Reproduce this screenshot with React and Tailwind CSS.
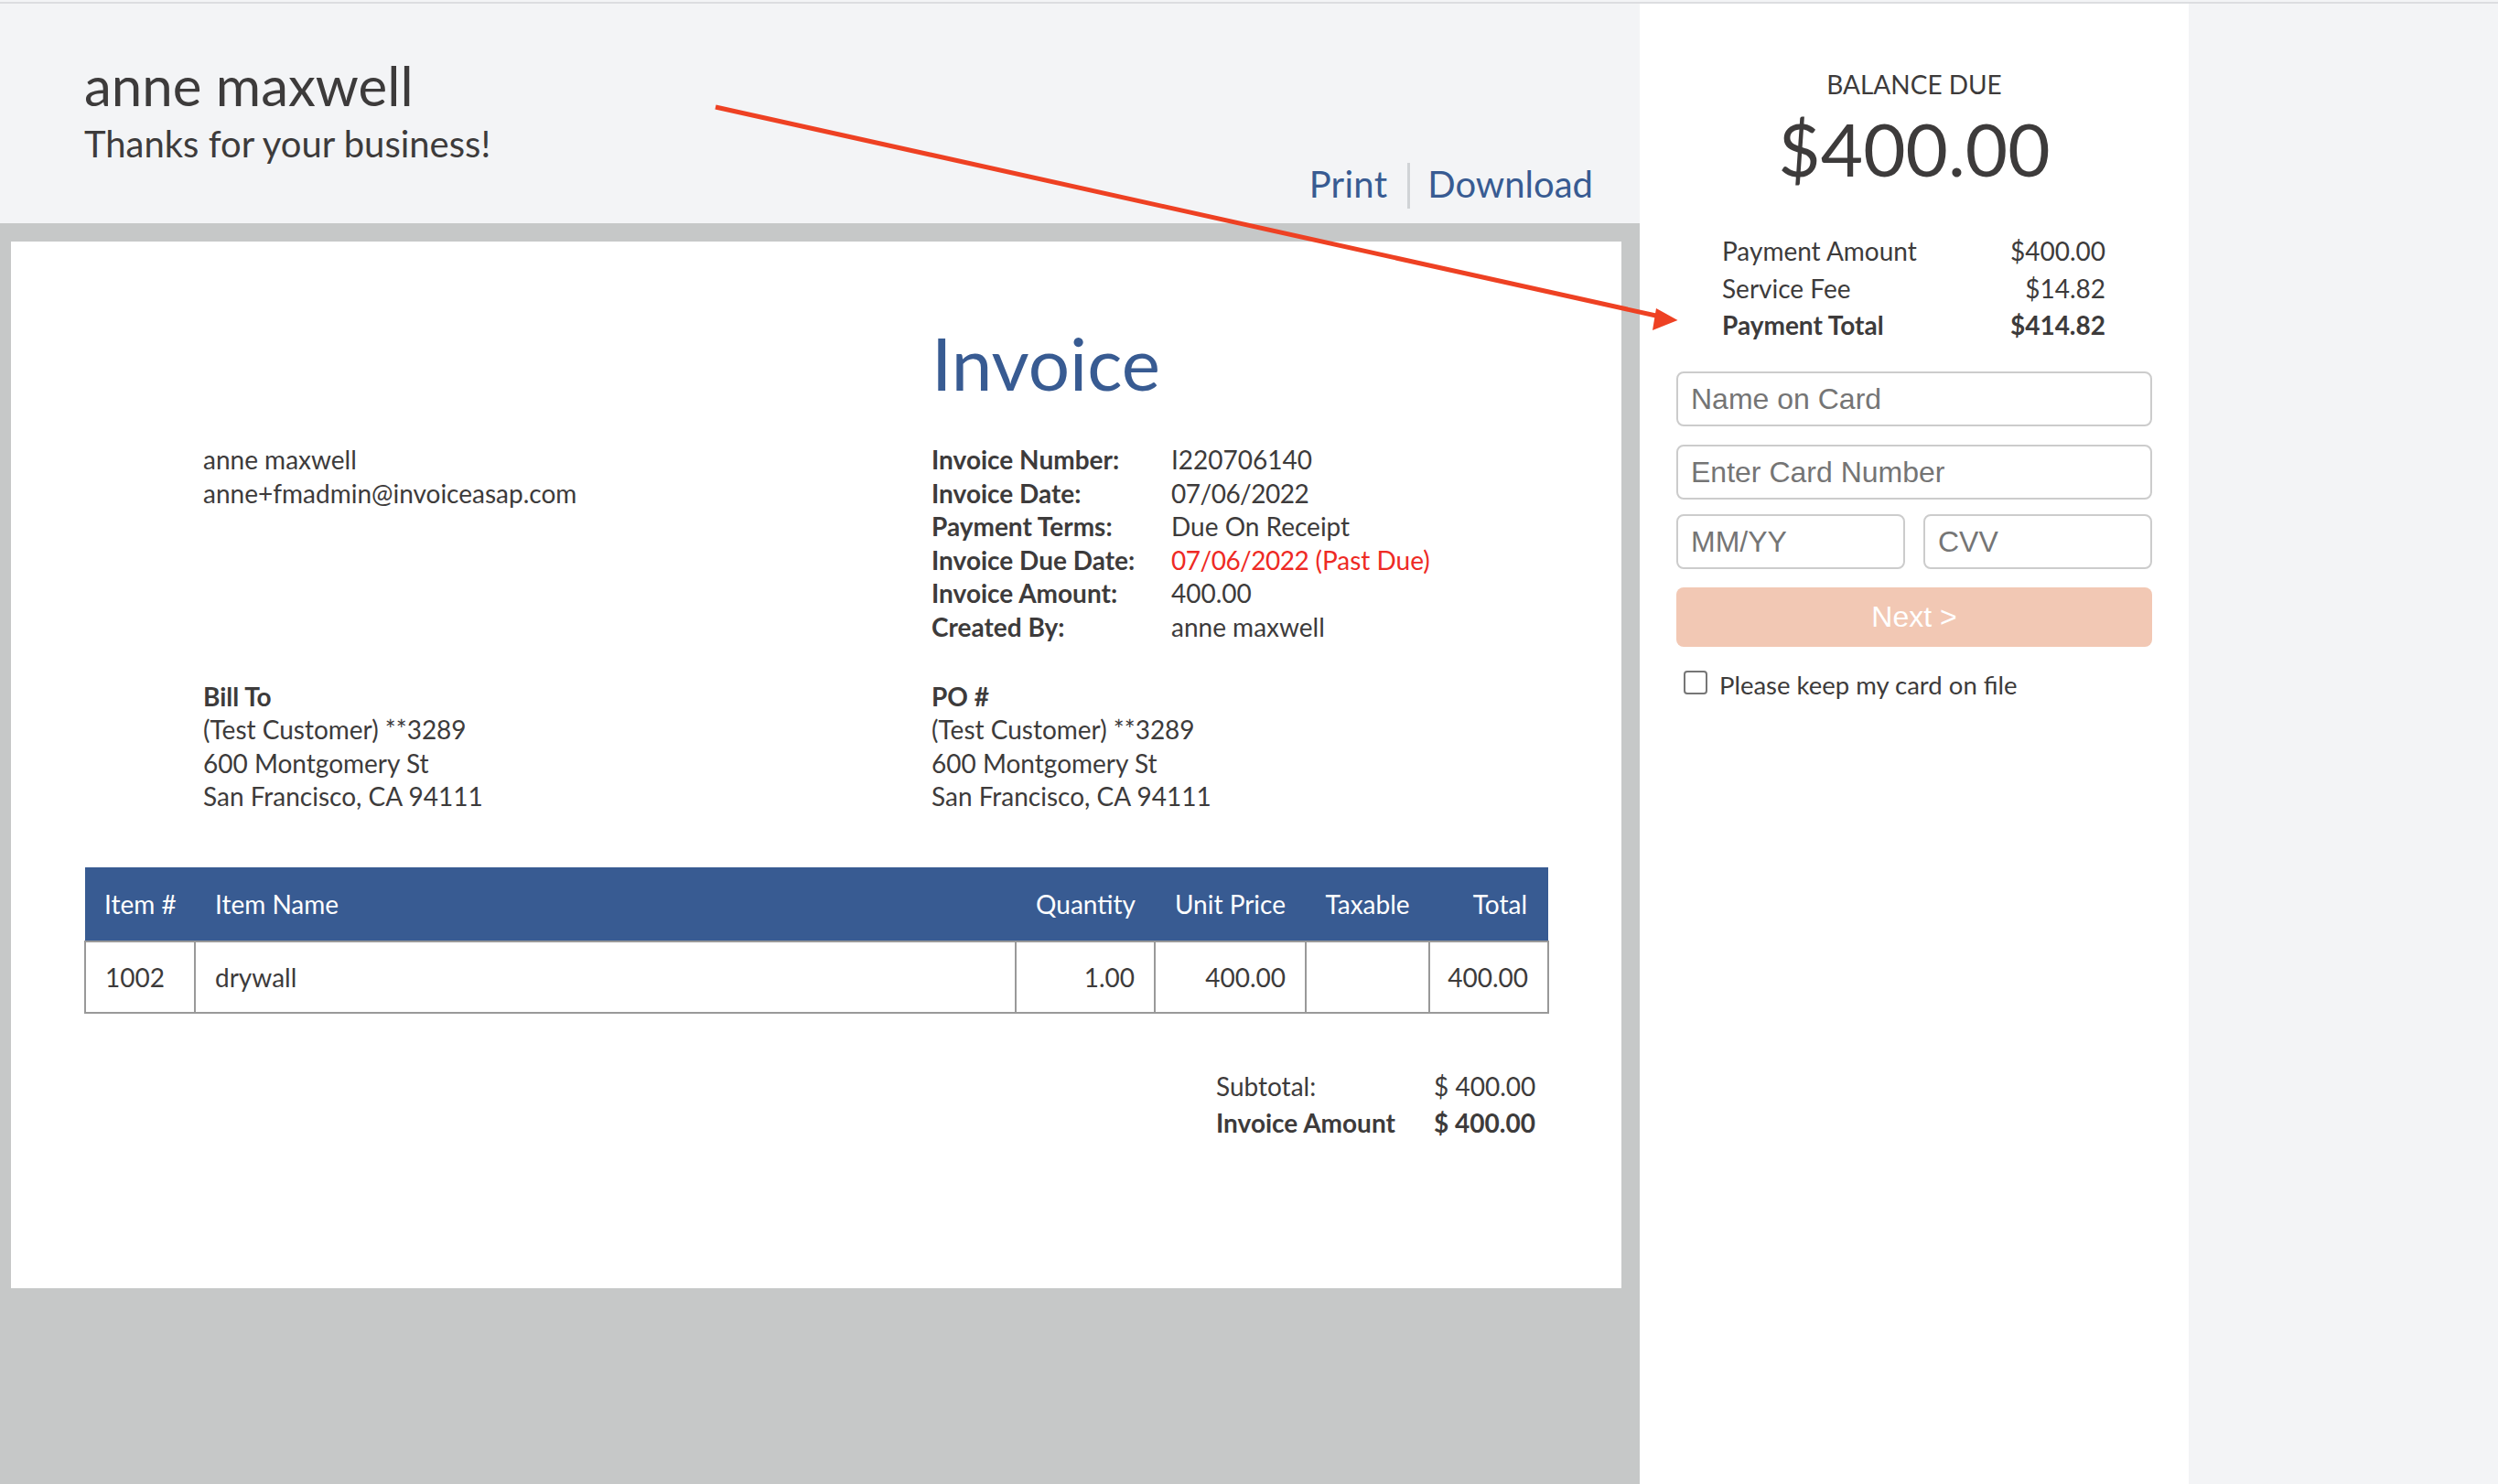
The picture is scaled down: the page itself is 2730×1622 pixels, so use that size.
import React from 'react';

const invoiceInfo = [
  ['Invoice Number:', 'I220706140'],
  ['Invoice Date:', <span className="tracking-[-0.5px]">07/06/2022</span>],
  ['Payment Terms:', 'Due On Receipt'],
  ['Invoice Due Date:', <><span className="tracking-[-0.5px]">07/06/2022</span> (Past Due)</>],
  ['Invoice Amount:', '400.00'],
  ['Created By:', 'anne maxwell'],
];

const Address = () => (
  <>
    <div>(Test Customer) **3289</div>
    <div>600 Montgomery St</div>
    <div>San Francisco, CA 94111</div>
  </>
);

const Header = () => (
  <header className="h-[240px] bg-[#f3f4f6] flex justify-between items-end pl-[92px] pr-[51px] pb-[16px]">
    <div className="self-start pt-[54px]">
      <div className="text-[60px] leading-[70px]">anne maxwell</div>
      <div className="text-[40px] leading-[50px] mt-[4px]">Thanks for your business!</div>
    </div>
    <div className="flex text-[40px] leading-[46px] text-[#385b92] h-[50px]">
      <a className="pr-[22px] border-r-[3px] border-[#d0d3d6] tracking-[0.3px]">Print</a>
      <a className="pl-[19px]">Download</a>
    </div>
  </header>
);

const ItemsTable = () => (
  <table className="w-[1599px] ml-[80px] table-fixed border-collapse text-[28px] mt-[59px]">
    <colgroup>
      <col className="w-[120px]" />
      <col className="w-[897px]" />
      <col className="w-[152px]" />
      <col className="w-[165px]" />
      <col className="w-[135px]" />
      <col className="w-[130px]" />
    </colgroup>
    <thead>
      <tr className="h-[81px] bg-[#385b92] text-white">
        <th className="font-normal text-left pl-[21px]">Item #</th>
        <th className="font-normal text-left pl-[22px]">Item Name</th>
        <th className="font-normal text-right pr-[21px]">Quantity</th>
        <th className="font-normal text-right pr-[22px]">Unit Price</th>
        <th className="font-normal text-center">Taxable</th>
        <th className="font-normal text-right pr-[23px]">Total</th>
      </tr>
    </thead>
    <tbody>
      <tr className="h-[78px]">
        <td className="border-2 border-[#999999] pl-[21px]">1002</td>
        <td className="border-2 border-[#999999] pl-[21px]">drywall</td>
        <td className="border-2 border-[#999999] text-right pr-[21px]">1.00</td>
        <td className="border-2 border-[#999999] text-right pr-[21px]">400.00</td>
        <td className="border-2 border-[#999999]"></td>
        <td className="border-2 border-[#999999] text-right pr-[21px]">400.00</td>
      </tr>
    </tbody>
  </table>
);

const InvoiceCard = () => (
  <div className="h-[1144px] w-[1760px] ml-[12px] bg-white text-[28px] leading-[36.6px]">
    <div className="grid grid-cols-[796px_1fr] pl-[210px] pt-[82px]">
      <div className="pt-[138px]">
        <div>anne maxwell</div>
        <div>anne+fmadmin@invoiceasap.com</div>
      </div>
      <div>
        <h1 className="text-[80px] leading-[100px] text-[#385b92] mb-[38px]">Invoice</h1>
        {invoiceInfo.map(([label, value]) => (
          <div key={label} className="flex">
            <div className="w-[262px] font-bold">{label}</div>
            <div className={label === 'Invoice Due Date:' ? 'text-[#ee2a24]' : ''}>{value}</div>
          </div>
        ))}
      </div>
    </div>
    <div className="grid grid-cols-[796px_1fr] pl-[210px] mt-[39px]">
      <div>
        <div className="font-bold">Bill To</div>
        <Address />
      </div>
      <div>
        <div className="font-bold">PO #</div>
        <Address />
      </div>
    </div>
    <ItemsTable />
    <div className="flex justify-end pr-[95px] mt-[59px] leading-[40px]">
      <div className="w-[238px]">
        <div>Subtotal:</div>
        <div className="font-bold">Invoice Amount</div>
      </div>
      <div className="w-[110px] text-right whitespace-nowrap">
        <div>$ 400.00</div>
        <div className="font-bold">$ 400.00</div>
      </div>
    </div>
  </div>
);

const PaymentPanel = () => {
  const inputClass =
    "w-full h-[60px] px-[14px] pt-[2px] border-2 border-[#cccccc] rounded-[8px] bg-white text-[32px] font-['Liberation_Sans',sans-serif] placeholder:text-[#757575] outline-none";
  return (
    <aside className="w-[600px] bg-white pt-[70px]">
      <div className="text-center text-[28px] leading-[36px]">BALANCE DUE</div>
      <div className="text-center text-[80px] leading-[100px] mt-[2px]">$400.00</div>
      <div className="mt-[42px] pl-[90px] pr-[91px] text-[28px] leading-[40.5px]">
        <div className="flex justify-between"><span>Payment Amount</span><span>$400.00</span></div>
        <div className="flex justify-between"><span>Service Fee</span><span>$14.82</span></div>
        <div className="flex justify-between font-bold"><span>Payment Total</span><span>$414.82</span></div>
      </div>
      <form className="mt-[30px] ml-[40px] mr-[40px]">
        <input className={inputClass} placeholder="Name on Card" />
        <input className={`${inputClass} mt-[20px]`} placeholder="Enter Card Number" />
        <div className="grid grid-cols-2 gap-[20px] mt-[16px]">
          <input className={inputClass} placeholder="MM/YY" />
          <input className={inputClass} placeholder="CVV" />
        </div>
        <button
          type="button"
          className="block w-full h-[65px] mt-[20px] rounded-[8px] bg-[#f2c8b4] text-white text-[32px] font-['Liberation_Sans',sans-serif]"
        >
          Next &gt;
        </button>
        <label className="flex items-center mt-[22px] ml-[8px] text-[27.5px] leading-[40px]">
          <span className="w-[26px] h-[26px] border-2 border-[#767676] rounded-[4px] bg-white mr-[13px] -mt-[6px]"></span>
          Please keep my card on file
        </label>
      </form>
    </aside>
  );
};

export default function App() {
  return (
    <div className="relative w-[2730px] h-[1622px] overflow-hidden bg-[#f3f4f6] font-['Lato',sans-serif] text-[#3d3b3b] pt-[4px]">
      <div className="absolute top-[2px] left-0 right-0 h-[2px] bg-[#dcdde0]"></div>
      <div className="flex h-full">
        <main className="w-[1792px] flex flex-col">
          <Header />
          <div className="flex-1 bg-[#c6c8c8] pt-[20px]">
            <InvoiceCard />
          </div>
        </main>
        <PaymentPanel />
      </div>
      {/* annotation arrow drawn over the page */}
      <svg className="absolute inset-0 pointer-events-none" width="2730" height="1622">
        <line x1="782" y1="117" x2="1812" y2="345.5" stroke="#ee4123" strokeWidth="5" />
        <polygon points="1833.5,350 1810,337 1806,361" fill="#ee4123" />
      </svg>
    </div>
  );
}
